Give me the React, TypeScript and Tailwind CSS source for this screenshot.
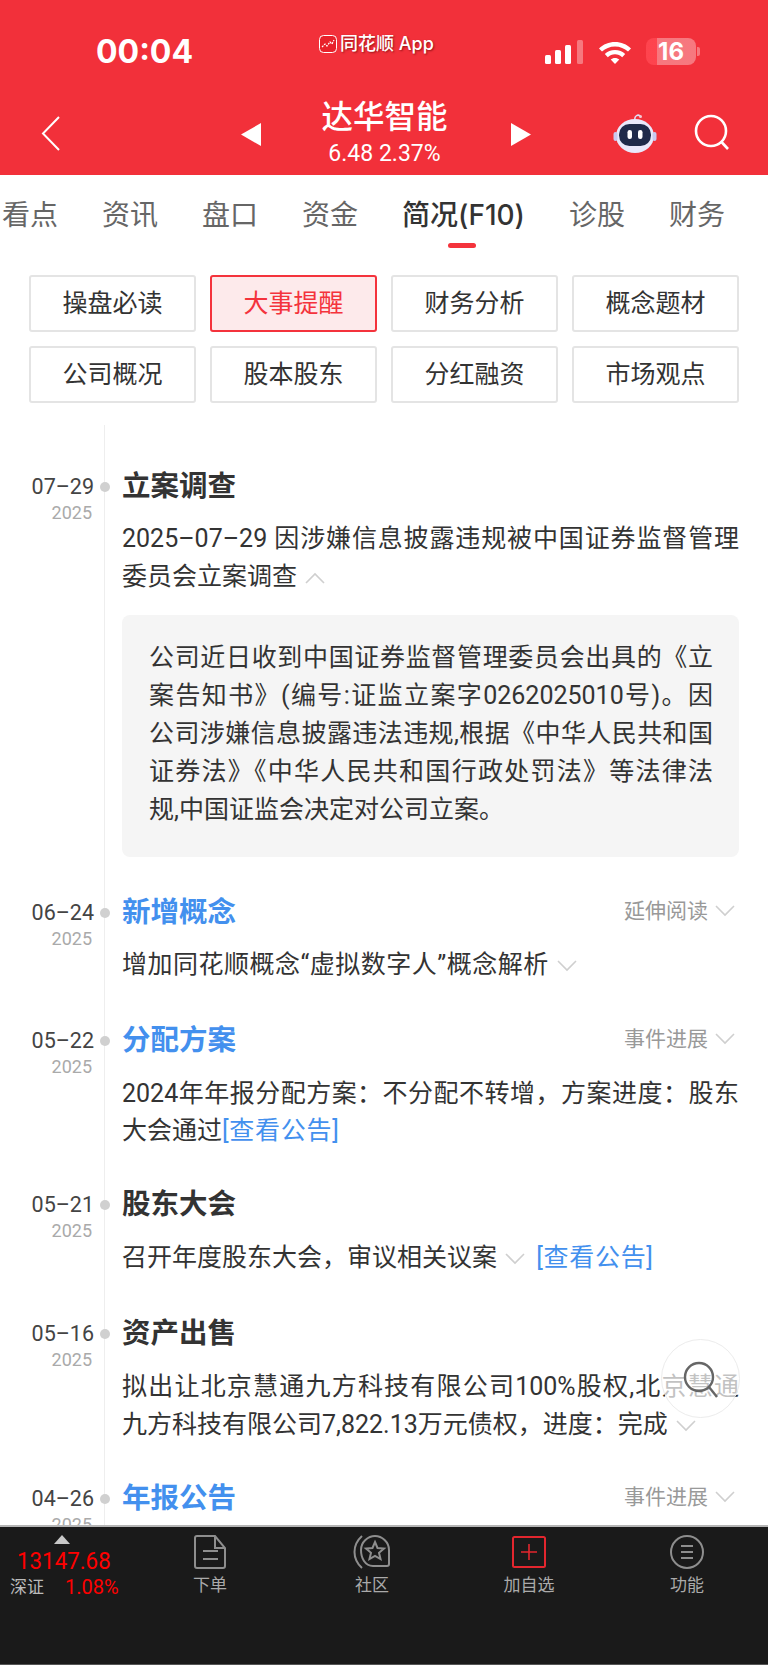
const cjk = "font-['Inter','Noto_Sans_CJK_SC',sans-serif]";

const topTabs = ['看点', '资讯', '盘口', '资金', '简况(F10)', '诊股', '财务'];
const filters = ['操盘必读', '大事提醒', '财务分析', '概念题材', '公司概况', '股本股东', '分红融资', '市场观点'];

function Chevron({ up = false, className = '' }: { up?: boolean; className?: string }) {
  return (
    <svg viewBox="0 0 20 12" className={`inline-block h-[12px] w-[20px] ${className}`} fill="none" stroke="#cfcfcf" strokeWidth="1.6">
      <path d={up ? 'M1 11 L10 2 L19 11' : 'M1 1 L10 10 L19 1'} />
    </svg>
  );
}

function StatusBar() {
  return (
    <div className="flex h-[76px] items-start pl-[96px] text-white">
      <div className="w-[223px] pt-[32px] text-[32px] font-bold leading-[40px]">00:04</div>
      <div className="flex w-[226px] items-center gap-[3px] pt-[34px] [text-shadow:1px_1px_2px_rgba(90,0,0,0.6)]">
        <svg viewBox="0 0 18 18" className="h-[18px] w-[18px]">
          <rect x="0.5" y="0.5" width="17" height="17" rx="4" fill="#e8212b" stroke="#fff" strokeWidth="1" />
          <path d="M3 12 L6 9 L8 11 L11 7 L13 9 L15 5" fill="none" stroke="#fff" strokeWidth="1.2" strokeDasharray="2 1" />
        </svg>
        <span className="text-[18px] font-medium leading-[20px]">同花顺 App</span>
      </div>
      <div className="flex items-center pt-[38px]">
        <svg viewBox="0 0 38 24" className="h-[24px] w-[38px]">
          <rect x="0" y="15" width="6" height="9" rx="1.5" fill="#fff" />
          <rect x="10" y="10" width="6" height="14" rx="1.5" fill="#fff" />
          <rect x="20" y="5" width="6" height="19" rx="1.5" fill="#fff" />
          <rect x="32" y="0" width="6" height="24" rx="1.5" fill="#fff" fillOpacity="0.35" />
        </svg>
        <svg viewBox="0 0 34 25" className="ml-[15px] h-[25px] w-[34px]" fill="#fff">
          <path d="M17 3C10.8 3 5.2 5.4 1 9.4L4 12.6C7.4 9.4 12 7.4 17 7.4S26.6 9.4 30 12.6L33 9.4C28.8 5.4 23.2 3 17 3Z" />
          <path d="M17 11C13 11 9.4 12.6 6.8 15L9.8 18.2C11.7 16.4 14.2 15.3 17 15.3S22.3 16.4 24.2 18.2L27.2 15C24.6 12.6 21 11 17 11Z" />
          <path d="M17 19C15.3 19 13.8 19.6 12.7 20.6L17 25L21.3 20.6C20.2 19.6 18.7 19 17 19Z" />
        </svg>
        <div className="ml-[14px] flex h-[27px] w-[50px] items-center justify-center rounded-[8px] bg-[linear-gradient(90deg,rgba(255,70,80,0.9)_22%,rgba(255,255,255,0.35)_22%)] text-[24px] font-bold leading-none">16</div>
        <div className="ml-[1px] h-[9px] w-[3px] rounded-r-[2px] bg-white/35" />
      </div>
    </div>
  );
}

function NavRow() {
  return (
    <div className="flex h-[99px] items-start">
      <div className="w-[241px] pl-[41px] pt-[40px]">
        <svg viewBox="0 0 19 35" className="h-[35px] w-[19px]" fill="none" stroke="#fff" strokeWidth="2">
          <path d="M18 1 L2 17.5 L18 34" />
        </svg>
      </div>
      <div className="flex w-[290px] items-start justify-between">
        <svg viewBox="0 0 20 23" className="mt-[47px] h-[23px] w-[20px]" fill="#fff">
          <path d="M20 0 V23 L0 11.5 Z" />
        </svg>
        <div className="mr-[3px] flex flex-col items-center text-white">
          <div className="pt-[21px] text-[31.5px] font-medium leading-[40px]">达华智能</div>
          <div className="pt-[3px] font-['Roboto',sans-serif] text-[23px] leading-[28px]">6.48 2.37%</div>
        </div>
        <svg viewBox="0 0 20 23" className="mt-[47px] h-[23px] w-[20px]" fill="#fff">
          <path d="M0 0 V23 L20 11.5 Z" />
        </svg>
      </div>
      <div className="ml-[82px] flex items-start pt-[38px]">
        <svg viewBox="0 0 44 40" className="h-[40px] w-[44px]">
          <path d="M22 6 C21 2 25 0 27 2" fill="none" stroke="#dfe0f7" strokeWidth="1.5" />
          <circle cx="27.5" cy="2.5" r="1.5" fill="#f4c9d4" />
          <ellipse cx="22" cy="22" rx="19" ry="17" fill="#e9e8fb" />
          <rect x="0.5" y="18" width="4" height="9" rx="2" fill="#c9c8f0" />
          <rect x="39.5" y="18" width="4" height="9" rx="2" fill="#c9c8f0" />
          <rect x="6" y="10" width="32" height="22" rx="10.5" fill="#1f2a4a" />
          <rect x="14.5" y="16" width="4.5" height="9" rx="2.2" fill="#fff" />
          <rect x="25" y="16" width="4.5" height="9" rx="2.2" fill="#fff" />
        </svg>
        <svg viewBox="0 0 36 36" className="ml-[37px] h-[36px] w-[36px]" fill="none" stroke="#fff" strokeWidth="2.6">
          <circle cx="17" cy="17" r="15" />
          <path d="M27.5 28 L34 35" />
        </svg>
      </div>
    </div>
  );
}

function TopTabs() {
  return (
    <div className="flex h-[72px] gap-[44px] pl-[2px] pt-[20px] text-[28px] leading-[40px] text-[#666]">
      {topTabs.map((tab) =>
        tab === '简况(F10)' ? (
          <div key={tab} className="relative font-medium text-[#333]">
            {tab}
            <span className="absolute left-[46px] top-[48px] h-[5px] w-[28px] rounded-full bg-[#f4333c]" />
          </div>
        ) : (
          <div key={tab}>{tab}</div>
        ),
      )}
    </div>
  );
}

function FilterGrid() {
  return (
    <div className="grid grid-cols-4 gap-x-[14px] gap-y-[14px] px-[29px] pt-[28px] pb-[22px]">
      {filters.map((f) => (
        <div
          key={f}
          className={`flex h-[57px] items-center justify-center rounded-[3px] border-2 text-[25px] ${
            f === '大事提醒' ? 'border-[#f4333c] bg-[#fdeaeb] text-[#f4333c]' : 'border-[#e4e4e4] text-[#333]'
          }`}
        >
          {f}
        </div>
      ))}
    </div>
  );
}

// a wrapped line that runs out to the column edge
function FullLine({ children }: { children: React.ReactNode }) {
  return <div className="text-justify [text-align-last:justify]">{children}</div>;
}

type EntryProps = {
  date: string;
  title: string;
  blue?: boolean;
  label?: string;
  gap: string;
  children?: React.ReactNode;
};

// one row of the timeline: date column on the left, rail and content on the right
function Entry({ date, title, blue, label, gap, children }: EntryProps) {
  return (
    <div className="flex">
      <div className="relative w-[104px] shrink-0 text-right">
        <div className="pr-[10px] pt-[3px] text-[21.5px] leading-[32px] text-[#444]">{date}</div>
        <div className="pr-[12px] text-[18px] leading-[20px] text-[#aaa]">2025</div>
        <span className="absolute left-[100px] top-[14px] h-[10px] w-[10px] rounded-full bg-[#d0d0d0]" />
      </div>
      <div className={`w-[635px] border-l border-[#eeeeee] pl-[17px] ${gap}`}>
        <div className="flex items-center justify-between">
          <div className={`text-[28.5px] font-bold leading-[38px] ${blue ? 'text-[#4390ee]' : 'text-[#333]'}`}>{title}</div>
          {label && (
            <div className="mb-[4px] flex items-center gap-[7px] pr-[4px] text-[21px] leading-[34px] text-[#999]">
              {label}
              <Chevron />
            </div>
          )}
        </div>
        {children}
      </div>
    </div>
  );
}

function Timeline() {
  return (
    <div className="whitespace-nowrap font-['Roboto','Noto_Sans_CJK_SC',sans-serif] text-[25px] text-[#333]">
      <div className="ml-[104px] h-[43px] w-px bg-[#eeeeee]" />
      <Entry date="07–29" title="立案调查" gap="pb-[37px]">
        <div className="mt-[14px] leading-[38px]">
          <FullLine>2025–07–29 因涉嫌信息披露违规被中国证券监督管理</FullLine>
          <div>
            委员会立案调查 <Chevron up className="ml-[2px]" />
          </div>
        </div>
        <div className="mt-[19px] rounded-[8px] bg-[#f5f5f5] pb-[28px] pl-[27px] pr-[26px] pt-[24px] leading-[38px]">
          <FullLine>公司近日收到中国证券监督管理委员会出具的《立</FullLine>
          <FullLine>案告知书》(编号:证监立案字0262025010号)。因</FullLine>
          <FullLine>公司涉嫌信息披露违法违规,根据《中华人民共和国</FullLine>
          <FullLine>证券法》《中华人民共和国行政处罚法》等法律法</FullLine>
          <div>规,中国证监会决定对公司立案。</div>
        </div>
      </Entry>
      <Entry date="06–24" title="新增概念" blue label="延伸阅读" gap="pb-[38px]">
        <div className="mt-[14px] leading-[38px] tracking-[0.5px]">
          增加同花顺概念“虚拟数字人”概念解析 <Chevron className="ml-[2px]" />
        </div>
      </Entry>
      <Entry date="05–22" title="分配方案" blue label="事件进展" gap="pb-[37px]">
        <div className="mt-[15px] leading-[37px]">
          <FullLine>2024年年报分配方案：不分配不转增，方案进度：股东</FullLine>
          <div>
            大会通过<span className="tracking-[0.7px] text-[#4390ee]">[查看公告]</span>
          </div>
        </div>
      </Entry>
      <Entry date="05–21" title="股东大会" gap="pb-[38px]">
        <div className="mt-[15px] leading-[38px]">
          召开年度股东大会，审议相关议案 <Chevron className="ml-[2px]" />
          <span className="ml-[11px] tracking-[0.7px] text-[#4390ee]">[查看公告]</span>
        </div>
      </Entry>
      <Entry date="05–16" title="资产出售" gap="pb-[36px]">
        <div className="mt-[15px] leading-[38px]">
          <FullLine>拟出让北京慧通九方科技有限公司100%股权,北京慧通</FullLine>
          <div>
            九方科技有限公司7,822.13万元债权，进度：完成 <Chevron className="ml-[2px]" />
          </div>
        </div>
      </Entry>
      <Entry date="04–26" title="年报公告" blue label="事件进展" gap="pb-[36px]" />
    </div>
  );
}

function TabItem({ label, icon }: { label: string; icon: React.ReactNode }) {
  return (
    <div className="flex w-[100px] flex-col items-center text-[17px] text-[#aaa]">
      <div className="flex h-[37px] items-center">{icon}</div>
      <div className="mt-[3px] leading-[24px]">{label}</div>
    </div>
  );
}

function BottomBar() {
  return (
    <div className="flex h-[140px] shrink-0 items-start border-t-2 border-b border-t-[#b5b5b5] border-b-[#555] bg-[#1a1a1a]">
      <div className="relative w-[160px] shrink-0 pl-[10px] pt-[8px]">
        <svg viewBox="0 0 16 9" className="ml-[44px] h-[9px] w-[16px]" fill="#c8c8c8">
          <path d="M8 0 L16 9 H0 Z" />
        </svg>
        <div className="ml-[7px] mt-[2px] origin-left scale-x-[0.93] font-['Roboto',sans-serif] text-[24px] leading-[30px] text-[#ff0000]">13147.68</div>
        <div className="mt-[-4px] flex items-center leading-[30px]">
          <span className="w-[55px] text-[17px] text-[#bbb]">深证</span>
          <span className="font-['Roboto',sans-serif] text-[20px] text-[#ff0000]">1.08%</span>
        </div>
      </div>
      <div className="flex pt-[6px]">
        <TabItem
          label="下单"
          icon={
            <svg viewBox="0 0 32 34" className="h-[34px] w-[32px]" fill="none" stroke="#8e8e8e" strokeWidth="2">
              <path d="M3 1 H21 L31 13 V31 Q31 33 29 33 H3 Q1 33 1 31 V3 Q1 1 3 1 Z" />
              <path d="M21 1 V13 H31" />
              <path d="M9 16 H24 M9 24 H24" />
            </svg>
          }
        />
        <div className="w-[62px]" />
        <TabItem
          label="社区"
          icon={
            <svg viewBox="0 0 38 36" className="h-[36px] w-[38px]" fill="none" stroke="#8e8e8e" strokeWidth="2">
              <path d="M9 2 C-1 11 -1 25 9 34" />
              <path d="M22 2 C29 2 36 8 36 16 V30 Q36 32 34 32 H20 C12 32 8 24 8 16 C8 8 15 2 22 2 Z" />
              <path d="M22 8 L24.5 14 L31 14.5 L26 18.8 L27.5 25 L22 21.8 L16.5 25 L18 18.8 L13 14.5 L19.5 14 Z" />
            </svg>
          }
        />
        <div className="w-[57px]" />
        <TabItem
          label="加自选"
          icon={
            <svg viewBox="0 0 34 32" className="h-[32px] w-[34px]" fill="none" stroke="#e3262e" strokeWidth="2">
              <rect x="1" y="1" width="32" height="30" rx="1.5" />
              <path d="M17 8 V24 M9 16 H25" strokeWidth="1.6" />
            </svg>
          }
        />
        <div className="w-[58px]" />
        <TabItem
          label="功能"
          icon={
            <svg viewBox="0 0 34 34" className="h-[34px] w-[34px]" fill="none" stroke="#8e8e8e" strokeWidth="2">
              <circle cx="17" cy="17" r="16" />
              <path d="M11 11 H23 M11 17 H23 M11 23 H23" />
            </svg>
          }
        />
      </div>
    </div>
  );
}

export default function App() {
  return (
    <div className={`relative flex h-[1665px] w-[768px] flex-col overflow-hidden bg-white ${cjk}`}>
      <div className="h-[175px] shrink-0 bg-[#f2303a]">
        <StatusBar />
        <NavRow />
      </div>
      <TopTabs />
      <div className="min-h-0 flex-1 overflow-hidden">
        <FilterGrid />
        <Timeline />
      </div>
      <BottomBar />
      {/* floating search button over the list */}
      <div className="absolute left-[661px] top-[1339px] flex h-[79px] w-[79px] items-start justify-start rounded-full border border-[#ececec] bg-white/70">
        <svg viewBox="0 0 36 38" className="ml-[21px] mt-[21px] h-[38px] w-[36px]" fill="none" stroke="#666" strokeWidth="2.4">
          <circle cx="16" cy="16" r="14" />
          <path d="M26 26 L34 36" />
        </svg>
      </div>
    </div>
  );
}
